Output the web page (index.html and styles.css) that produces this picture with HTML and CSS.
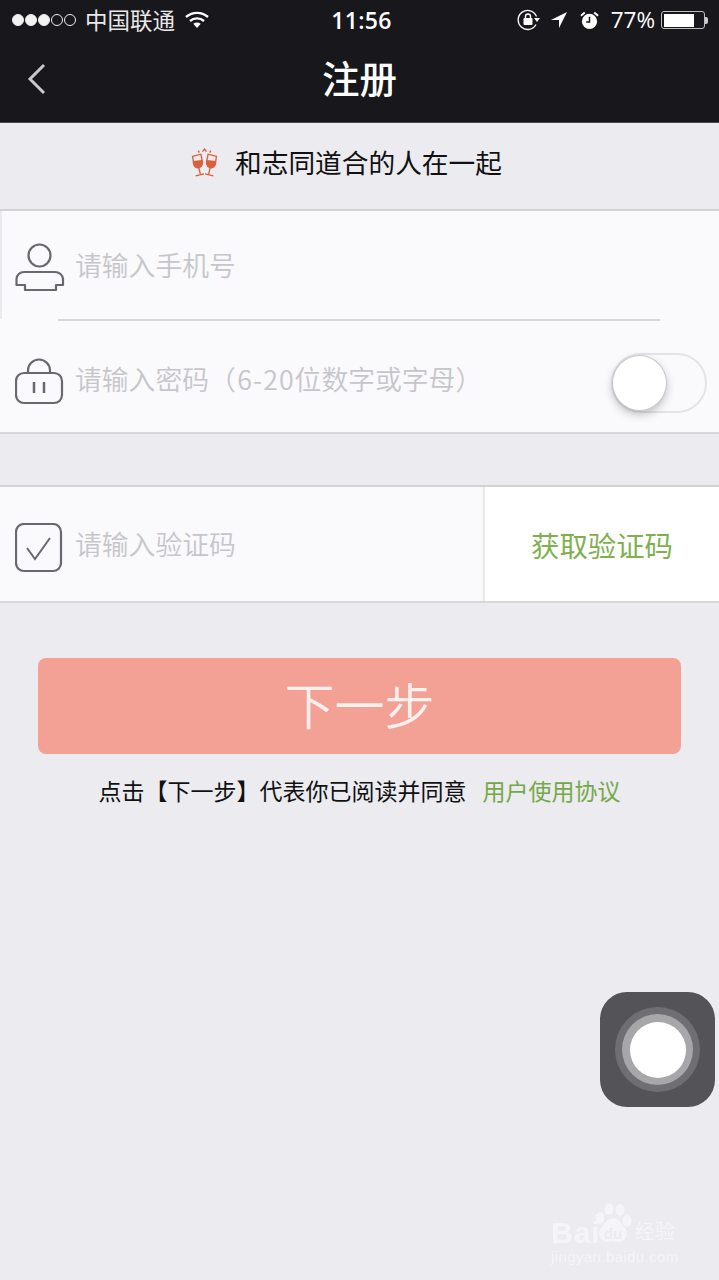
FILE: index.html
```html
<!DOCTYPE html>
<html lang="zh-CN">
<head>
<meta charset="utf-8">
<title>注册</title>
<link rel="stylesheet" href="styles.css">
</head>
<body>
<div class="page">
  <header class="top">
    <div class="status">
      <div class="status-left">
        <span class="dots"><i class="dot on"></i><i class="dot on"></i><i class="dot on"></i><i class="dot"></i><i class="dot"></i></span>
        <span class="carrier">中国联通</span>
        <svg class="wifi" width="24" height="17" viewBox="0 0 24 17"><path d="M1 6C7.500 .5 16.500 .5 23 6" fill="none" stroke="#fff" stroke-width="2.400"/><path d="M5 10C9 6.500 15 6.500 19 10" fill="none" stroke="#fff" stroke-width="2.400"/><path d="M8.300 12.800C10.800 11 13.200 11 15.700 12.800L12 17Z" fill="#fff"/></svg>
      </div>
      <span class="time">11:56</span>
      <div class="status-right">
        <svg class="ic-lock" width="24" height="22" viewBox="0 0 24 22"><path d="M19 15.500A9.500 9.500 0 1 1 19.500 7.500" fill="none" stroke="#fff" stroke-width="1.300"/><rect x="6.500" y="9" width="9" height="7" rx="1" fill="#fff"/><path d="M8.500 9V7.500a2.500 2.500 0 0 1 5 0V9" fill="none" stroke="#fff" stroke-width="1.400"/><path d="M17 9h6l-3 4Z" fill="#fff"/></svg>
        <svg class="ic-loc" width="18" height="18" viewBox="0 0 19 19"><path d="M18 1 1 9.500h8.500V18Z" fill="#fff"/></svg>
        <svg class="ic-alarm" width="19" height="19" viewBox="0 0 20 20"><circle cx="10" cy="11" r="8" fill="#fff"/><path d="M10 6v5.500H6.500" fill="none" stroke="#18171b" stroke-width="1.600"/><path d="M1 5 5 1.500M19 5l-4-3.500" stroke="#fff" stroke-width="2"/></svg>
        <span class="pct">77%</span>
        <span class="battery"><span class="battery-fill"></span></span><span class="battery-tip"></span>
      </div>
    </div>
    <nav class="nav">
      <svg class="back" width="20" height="32" viewBox="0 0 20 32"><path d="M17 2 3 16l14 14" fill="none" stroke="#c9c9cb" stroke-width="3"/></svg>
      <h1 class="title">注册</h1>
    </nav>
  </header>

  <div class="slogan">
    <svg class="cheers" width="29" height="29" viewBox="2.500 .5 25 28">
      <g fill="none" stroke="#d9603a" stroke-width="1.300">
        <path d="M3.500 8.500 11.500 6.500 13 14c.5 3-1.500 5-3.500 5.500s-4.500-.5-5-3.500Z"/>
        <path d="M9.500 19.500 11 26M6.500 27.500 14.500 25.500"/>
        <path d="M26.500 8.500 18.500 6.500 17 14c-.5 3 1.500 5 3.500 5.500s4.500-.5 5-3.500Z"/>
        <path d="M20.500 19.500 19 26M23.500 27.500 15.500 25.500"/>
        <path d="M13 4 15 1.500 17 4M9 3l1 2M21 3l-1 2"/>
      </g>
      <path d="M4 13 12.500 12 13 14c.5 3-1.500 5-3.500 5.500s-4.500-.5-5-3.500Z" fill="#d9603a"/>
      <path d="M26 13 17.500 12 17 14c-.5 3 1.500 5 3.500 5.500s4.500-.5 5-3.500Z" fill="#d9603a"/>
    </svg>
    <span>和志同道合的人在一起</span>
  </div>

  <section class="card">
    <div class="row row-phone">
      <svg class="icon" width="50" height="50" viewBox="0 0 50 50"><g fill="none" stroke="#69686d" stroke-width="2.200"><circle cx="24.500" cy="13.500" r="11"/><path d="M9 30H40C44 30 48 33 48 37V43H41V48H10V43H1.500V37C1.500 33 5 30 9 30Z" stroke-linejoin="round"/></g></svg>
      <span class="ph">请输入手机号</span>
    </div>
    <div class="divider"></div>
    <div class="row row-pass">
      <svg class="icon" width="50" height="50" viewBox="0 0 50 50"><g fill="none" stroke="#69686d" stroke-width="2.200"><rect x="1" y="16" width="46" height="30" rx="8"/><path d="M13 16V13.500A11 11 0 0 1 35 13.500V16"/><path d="M19 25v11M29 25v11" stroke-width="2.500"/></g></svg>
      <span class="ph">请输入密码（<span class="digits">6-20</span>位数字或字母）</span>
      <span class="switch"><span class="knob"></span></span>
    </div>
  </section>

  <section class="card card-code">
    <div class="row row-code">
      <svg class="icon" width="50" height="50" viewBox="0 0 50 50"><g fill="none" stroke="#69686d" stroke-width="2.200"><rect x="1" y="1" width="45" height="47" rx="8"/></g><path d="M12 25 20 36 35 15" fill="none" stroke="#69686d" stroke-width="2"/></svg>
      <span class="ph">请输入验证码</span>
    </div>
    <div class="get-code">获取验证码</div>
  </section>

  <button class="next" type="button">下一步</button>
  <p class="agree">点击【下一步】代表你已阅读并同意<a class="link">用户使用协议</a></p>

  <div class="assist"><span class="assist-a"><span class="assist-b"><span class="assist-c"></span></span></span></div>

  <div class="mark">
    <div class="mark-top">
      <span class="mark-bai">Bai</span>
      <svg class="paw" width="40" height="42" viewBox="0 0 40 42"><g fill="#f5f5f8"><ellipse cx="6" cy="15" rx="4.500" ry="6"/><ellipse cx="15" cy="6" rx="4.500" ry="6"/><ellipse cx="26" cy="7" rx="4.500" ry="6"/><ellipse cx="33" cy="18" rx="4.500" ry="6"/><path d="M19 15c6 0 8 6 12 10 4 5 1 14-6 14-3 0-4-1-6-1s-3 1-6 1c-7 0-10-9-6-14 4-4 6-10 12-10Z"/></g><text class="paw-du" x="19" y="36">du</text></svg>
      <span class="mark-cn">经验</span>
    </div>
    <div class="mark-url">jingyan.baidu.com</div>
  </div>
</div>
</body>
</html>
```
FILE: styles.css
```css
* { box-sizing: border-box; }
html, body { margin: 0; padding: 0; }
body {
  width: 719px;
  height: 1280px;
  overflow: hidden;
  font-family: "Noto Sans CJK SC", "Noto Sans", sans-serif;
}
.page {
  position: relative;
  width: 719px;
  height: 1280px;
  background: #ebebf0;
  overflow: hidden;
}
.top {
  height: 123px;
  background: #18171b;
  border-bottom: 1px solid #4a494d;
  color: #fff;
}
.status {
  height: 40px;
  display: grid;
  grid-template-columns: 1fr auto 1fr;
  align-items: center;
  padding: 0 0 0 12px;
}
.status-left { display: flex; align-items: center; }
.dots { display: flex; gap: 1px; }
.dot {
  display: block;
  width: 12px;
  height: 12px;
  border: 1px solid #eee;
  border-radius: 50%;
}
.dot.on { background: #f2f2f2; }
.carrier { font-size: 22.500px; line-height: 40px; margin: -3px 0 0 9px; color: #e8e8e8; }
.wifi { margin: -2px 0 0 10px; }
.time { font-family: "Open Sans", sans-serif; font-size: 23px; font-weight: 600; letter-spacing: 0.300px; margin-left: -8px; }
.status-right { display: flex; align-items: center; justify-content: flex-end; padding-right: 11px; }
.ic-loc { margin-left: 9px; }
.ic-alarm { margin-left: 12px; }
.pct { font-family: "Open Sans", sans-serif; font-size: 22.500px; margin-left: 12px; line-height: 40px; }
.battery {
  display: block;
  width: 44px;
  height: 18px;
  margin-left: 6px;
  border: 1.500px solid #bdbdbd;
  border-radius: 3px;
  padding: 1.500px;
}
.battery-fill { display: block; width: 30px; height: 100%; background: #fff; }
.battery-tip { display: block; width: 3px; height: 7px; background: #ccc; border-radius: 0 2px 2px 0; }
.nav {
  position: relative;
  height: 82px;
  display: flex;
  align-items: center;
  justify-content: center;
}
.back { position: absolute; left: 27px; top: 23px; }
.title { margin: 0 0 10px; font-size: 37.500px; font-weight: 500; line-height: 1.200; }
.slogan {
  height: 86px;
  padding: 0 27px 10px 0;
  display: flex;
  align-items: center;
  justify-content: center;
  gap: 16px;
  font-size: 26.700px;
  color: #111;
}
.cheers { margin-top: 2px; }
.card {
  background: #faf9fc;
  border-top: 2px solid #d2d2d5;
  border-bottom: 2px solid #d8d8db;
}
.row { position: relative; display: flex; align-items: center; padding-left: 15px; }
.row-phone { height: 108px; border-left: 2px solid #eceaef; padding-left: 13px; }
.row-pass { height: 111px; }
.row-code { flex: 1; height: 100%; }
.divider { height: 2px; margin: 0 59px 0 58px; background: #d6d6d9; }
.row-phone .icon { margin-top: 3px; }
.row-pass .icon { margin-top: 11px; }
.row-code .icon { margin-top: 7px; }
.ph { margin-left: 10px; font-size: 26.800px; font-weight: 350; color: #c6c6ca; line-height: 1.200; }
.digits { margin-left: 1.500px; letter-spacing: 1px; }
.row-pass .ph { margin-top: 6px; }
.switch {
  position: absolute;
  right: 12px;
  top: 32px;
  width: 96px;
  height: 60px;
  border: 2px solid #e4e4e6;
  border-radius: 30px;
  background: #faf9fc;
}
.knob {
  position: absolute;
  left: -1px;
  top: 0;
  width: 55px;
  height: 56px;
  border-radius: 50%;
  background: #fff;
  border: 1px solid #c6c6c8;
  box-shadow: 0 4px 8px rgba(0, 0, 0, .22);
}
.card-code {
  margin-top: 51px;
  height: 118px;
  display: flex;
}
.get-code {
  width: 236px;
  background: #fff;
  border-left: 2px solid #e9e9ec;
  display: flex;
  align-items: center;
  justify-content: center;
  font-size: 28.400px;
  color: #7fb04f;
}
.next {
  display: block;
  width: 643px;
  height: 96px;
  margin: 55px 0 0 38px;
  border: 0;
  border-radius: 8px;
  background: #f3a195;
  color: #fdf1ef;
  font-family: inherit;
  font-size: 50px;
  font-weight: 350;
  padding: 0 0 6px;
}
.agree {
  margin: 20px 0 0;
  text-align: center;
  font-size: 23px;
  line-height: 32px;
  color: #111;
}
.link { margin-left: 16px; color: #74a948; }
.assist {
  position: absolute;
  left: 600px;
  top: 992px;
  width: 115px;
  height: 115px;
  border-radius: 27px;
  background: #545458;
  display: flex;
  align-items: center;
  justify-content: center;
}
.assist-a, .assist-b, .assist-c { display: flex; align-items: center; justify-content: center; border-radius: 50%; }
.assist-a { width: 85px; height: 85px; background: #6f6f73; }
.assist-b { width: 71px; height: 71px; background: #a7a7aa; }
.assist-c { width: 56px; height: 56px; background: #fff; }
.mark {
  position: absolute;
  left: 551px;
  top: 1203px;
  width: 130px;
  color: #f5f5f8;
}
.mark-top { display: flex; align-items: flex-end; height: 42px; }
.mark-bai { font-family: "Liberation Sans", sans-serif; font-size: 30px; font-weight: 700; line-height: 36px; letter-spacing: 1px; margin-bottom: -6px; }
.paw { margin-left: -7px; flex: none; }
.paw-du { font-family: "Liberation Sans", sans-serif; font-size: 15px; font-weight: 700; fill: #ebebf0; text-anchor: middle; }
.mark-cn { font-size: 20px; line-height: 26px; margin-left: 1px; margin-bottom: 1px; white-space: nowrap; }
.mark-url { font-family: "Liberation Sans", sans-serif; font-size: 15px; letter-spacing: 0.400px; white-space: nowrap; margin-top: 3px; }
```
